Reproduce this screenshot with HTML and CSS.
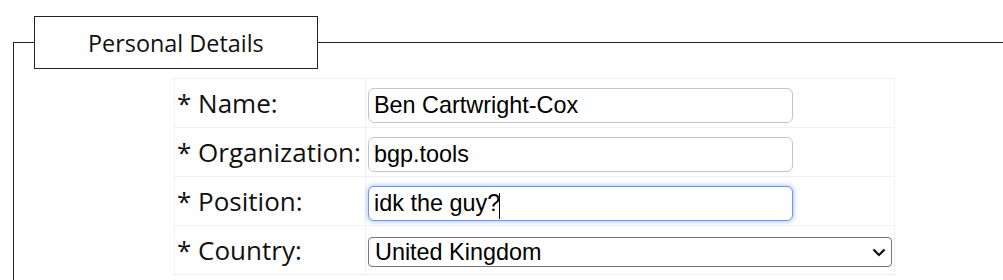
FILE: index.html
```html
<!DOCTYPE html>
<html lang="en">
<head>
  <meta charset="utf-8">
  <meta name="viewport" content="width=device-width, initial-scale=1">
  <title>Personal Details</title>
  <link rel="stylesheet" href="styles.css">
</head>
<body>
  <form>
    <fieldset class="section">
      <legend class="section-title">Personal Details</legend>
      <table class="fields">
        <tr>
          <td class="label">* Name:</td>
          <td><input class="field" type="text" name="name" value="Ben Cartwright-Cox"></td>
        </tr>
        <tr>
          <td class="label">* Organization:</td>
          <td><input class="field" type="text" name="org" value="bgp.tools"></td>
        </tr>
        <tr>
          <td class="label">* Position:</td>
          <td>
            <span class="field-wrap">
              <input class="field focused" type="text" name="position" value="idk the guy?">
              <span class="caret"></span>
            </span>
          </td>
        </tr>
        <tr>
          <td class="label">* Country:</td>
          <td>
            <select class="picker" name="country">
              <option>United Kingdom</option>
              <option>United States</option>
              <option>Netherlands</option>
            </select>
          </td>
        </tr>
      </table>
    </fieldset>
  </form>
</body>
</html>
```

FILE: styles.css
```css
body {
  margin: 0;
  font-family: "Open Sans", sans-serif;
  color: #111;
  background: #fff;
}
.section {
  margin: 16px 0 0 13px;
  padding: 9px 0 20px 20px;
  border: 1px solid #222;
  border-right: none;
}
.section-title {
  padding: 9.5px 53px;
  border: 1px solid #222;
  font-size: 23.4px;
  color: #111;
}
.fields {
  margin-left: 140px;
  border-collapse: collapse;
}
.fields td {
  padding: 6px 2px;
  border: 1px solid #f0f0f0;
  vertical-align: middle;
}
.label {
  width: 186px;
  font-size: 26px;
  line-height: 36px;
  white-space: nowrap;
}
.field {
  display: block;
  box-sizing: border-box;
  width: 425px;
  height: 35px;
  margin: 3px 0 -2px;
  padding: 0 5px;
  border: 1px solid #c6c6c6;
  border-radius: 6px;
  font-family: "Liberation Sans", Arial, sans-serif;
  font-size: 23.4px;
  color: #000;
  outline: none;
}
.field.focused {
  border-color: #6d95f2;
  box-shadow: 0 0 4px 1px #b0c6fb;
}
.field-wrap {
  position: relative;
  display: block;
}
.caret {
  position: absolute;
  left: 131px;
  top: 7px;
  width: 1px;
  height: 26px;
  background: #000;
}
.picker {
  display: block;
  box-sizing: border-box;
  width: 524px;
  height: 30px;
  margin: 5px 0 1px;
  padding: 0 30px 0 6px;
  border: 1px solid #767676;
  border-radius: 4px;
  appearance: none;
  background: #fff url("data:image/svg+xml,%3Csvg xmlns='http://www.w3.org/2000/svg' width='14' height='9' viewBox='0 0 14 9'%3E%3Cpath d='M1.5 1.5 7 7l5.5-5.5' fill='none' stroke='%23111' stroke-width='2.2'/%3E%3C/svg%3E") no-repeat right 5px center;
  font-family: "Liberation Sans", Arial, sans-serif;
  font-size: 23.4px;
  color: #000;
}
```
